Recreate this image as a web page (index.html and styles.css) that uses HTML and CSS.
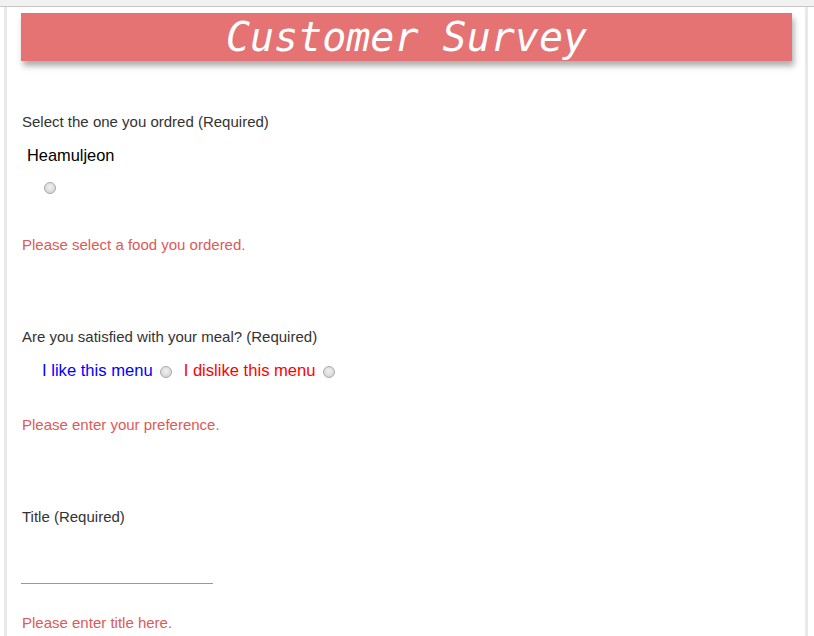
FILE: index.html
```html
<!DOCTYPE html>
<html>
<head>
<meta charset="utf-8">
<title>Customer Survey</title>
<link rel="stylesheet" href="styles.css">
</head>
<body>
<div class="topbar"></div>
<div class="page">
  <header class="banner">
    <h1 class="banner-title">Customer Survey</h1>
  </header>
  <form class="survey">
    <div class="question q-first">Select the one you ordred (Required)</div>
    <div class="food-name">Heamuljeon</div>
    <input class="radio radio-food" type="radio" name="food">
    <div class="error err-food">Please select a food you ordered.</div>

    <div class="question q-gap">Are you satisfied with your meal? (Required)</div>
    <div class="pref-row">
      <span class="like">I like this menu</span>
      <input class="radio radio-pref" type="radio" name="pref">
      <span class="dislike">I dislike this menu</span>
      <input class="radio radio-pref" type="radio" name="pref">
    </div>
    <div class="error err-pref">Please enter your preference.</div>

    <div class="question q-gap">Title (Required)</div>
    <input class="title-input" type="text">
    <div class="error err-title">Please enter title here.</div>
  </form>
</div>
</body>
</html>
```

FILE: styles.css
```css
html, body {
  margin: 0;
  padding: 0;
  background: #ffffff;
  font-family: "Liberation Sans", Arial, sans-serif;
}

.topbar {
  height: 6px;
  background: #f1f1f1;
  border-bottom: 1px solid #c6c6c6;
}

.page {
  margin-left: 4px;
  width: 798px;
  border-left: 3px solid #e9e9e9;
  border-right: 3px solid #e9e9e9;
  height: 629px;
  overflow: hidden;
}

.banner {
  margin: 6px 13px 0 14px;
  height: 48px;
  background: #e57373;
  box-shadow: 2px 5px 6px rgba(0, 0, 0, 0.32);
}

.banner-title {
  margin: 0;
  font-family: "DejaVu Sans Mono", "Liberation Mono", monospace;
  font-style: italic;
  font-weight: normal;
  font-size: 40px;
  line-height: 48px;
  color: #ffffff;
  text-align: center;
}

.survey {
  padding-left: 14px;
  display: flex;
  flex-direction: column;
  align-items: flex-start;
}

.question {
  font-size: 15px;
  line-height: 20px;
  color: #333333;
  padding-left: 1px;
}

.q-first { margin-top: 51px; }
.q-gap { margin-top: 72px; }

.food-name {
  margin-top: 13px;
  padding-left: 6px;
  font-size: 16.4px;
  line-height: 20px;
  color: #000000;
}

.radio {
  -webkit-appearance: none;
  appearance: none;
  width: 12px;
  height: 12px;
  margin: 0;
  border-radius: 50%;
  border: 1px solid #a9a9a9;
  background: radial-gradient(circle at 50% 40%, #f0f0f0 0%, #dcdcdc 60%, #cfcfcf 100%);
  box-sizing: border-box;
}

.radio-food {
  margin-top: 17px;
  margin-left: 23px;
}

.error {
  font-size: 15px;
  line-height: 20px;
  color: #dc5a58;
  padding-left: 1px;
}

.err-food { margin-top: 41px; }
.err-pref { margin-top: 34px; }
.err-title { margin-top: 29px; }

.pref-row {
  margin-top: 14px;
  padding-left: 21px;
  display: flex;
  align-items: center;
  font-size: 16.6px;
  line-height: 20px;
}

.like { color: #0000ff; }
.dislike { color: #ff0000; margin-left: 12px; }

.radio-pref {
  margin-left: 7px;
  margin-top: 2px;
}

.title-input {
  margin-top: 36px;
  width: 192px;
  height: 21px;
  box-sizing: border-box;
  border: none;
  border-bottom: 1px solid #999999;
  padding: 0;
  font-family: "Liberation Sans", Arial, sans-serif;
  font-size: 14px;
  outline: none;
  background: transparent;
}
```
